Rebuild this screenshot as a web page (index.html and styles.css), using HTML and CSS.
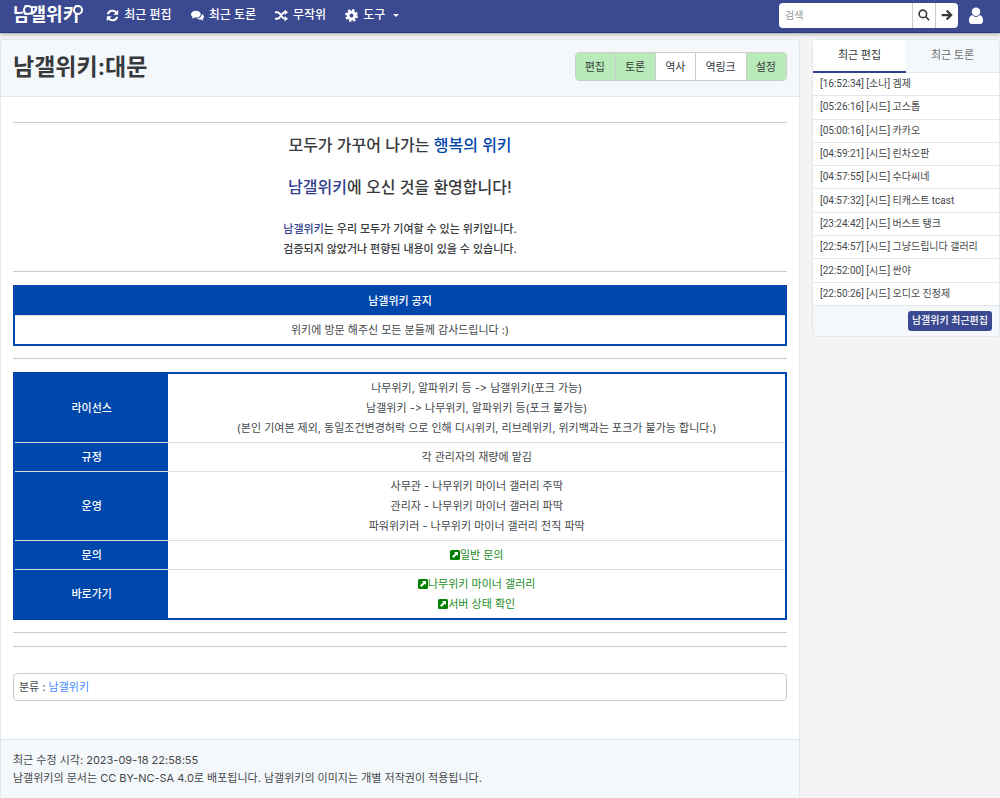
FILE: index.html
```
<!DOCTYPE html>
<html lang="ko">
<head>
    <meta charset="UTF-8">
    <meta name="viewport" content="width=device-width, initial-scale=1.0">
    <title>남갤위키:대문</title>
    <link rel="stylesheet" href="styles.css">
</head>
<body>
    <nav class="navbar">
        <a class="brand" href="#">남갤위키</a>
        <a class="nav-link" href="#">
            <svg class="icon" viewBox="0 0 16 16" fill="none" stroke="currentColor" stroke-width="2.4"><path d="M2.2 6.6a6 6 0 0 1 10.4-2.4M13.8 9.4a6 6 0 0 1-10.4 2.4"/><path d="M15 1v6H9zM1 15V9h6z" fill="currentColor" stroke="none"/></svg>
            최근 편집
        </a>
        <a class="nav-link" href="#">
            <svg class="icon" viewBox="0 0 16 16" fill="currentColor"><path d="M6 2C2.700 2 0 4 0 6.500c0 1.400.8 2.600 2.100 3.400-.2.700-.6 1.200-1.100 1.700 1.300-.1 2.400-.5 3.200-1.200.6.100 1.200.200 1.800.200 3.300 0 6-1.900 6-4.200S9.300 2 6 2z"/><path d="M13.300 6c.1 3.300-3 5.600-6.500 5.800 1 .8 2.500 1.200 4 1.200.5 0 1 0 1.400-.1.900.7 1.900 1.100 3.100 1.200-.5-.5-.8-1-1-1.700 1-.7 1.700-1.700 1.700-2.900 0-1.500-1-2.900-2.700-3.500z"/></svg>
            최근 토론
        </a>
        <a class="nav-link" href="#">
            <svg class="icon" viewBox="0 0 16 16"><path d="M0 4h3c4 0 5 8 9 8h1M0 12h3c4 0 5-8 9-8h1" fill="none" stroke="currentColor" stroke-width="2.2"/><path d="M12 0.500 16 4l-4 3.500zM12 8.500l4 3.500-4 3.500z" fill="currentColor"/></svg>
            무작위
        </a>
        <a class="nav-link" href="#">
            <svg class="icon" viewBox="0 0 16 16"><circle cx="8" cy="8" r="4.200" fill="none" stroke="currentColor" stroke-width="3.600"/><circle cx="8" cy="8" r="6.400" fill="none" stroke="currentColor" stroke-width="3" stroke-dasharray="2.800 2.230"/></svg>
            도구
            <span class="caret"></span>
        </a>
        <form class="search">
            <input type="search" placeholder="검색" aria-label="검색">
            <button type="submit" aria-label="찾기">
                <svg viewBox="0 0 16 16" fill="none" stroke="currentColor" stroke-width="2.2"><circle cx="6.500" cy="6.500" r="5"/><path d="M10.200 10.200 15 15"/></svg>
            </button>
            <button type="button" aria-label="이동">
                <svg viewBox="0 0 16 16" fill="none" stroke="currentColor" stroke-width="3"><path d="M1 8h12M7.500 2l6 6-6 6"/></svg>
            </button>
        </form>
        <a class="user" href="#" aria-label="로그인">
            <svg viewBox="0 0 16 18" fill="currentColor"><circle cx="8" cy="5" r="4.500"/><path d="M4 8.500C1.500 9 .5 11.500.5 14.500.5 16.500 1.700 18 3.500 18h9c1.800 0 3-1.500 3-3.500 0-3-1-5.500-3.500-6-1 1.200-2.400 2-4 2s-3-.8-4-2z"/></svg>
        </a>
    </nav>

    <div class="container">
        <main class="article">
            <header class="article-header">
                <h1>남갤위키:대문</h1>
                <div class="tools">
                    <button class="green">편집</button>
                    <button class="green">토론</button>
                    <button>역사</button>
                    <button>역링크</button>
                    <button class="green">설정</button>
                </div>
            </header>

            <div class="article-body">
                <hr>
                <div class="welcome">
                    <h2>모두가 가꾸어 나가는 <span class="blue">행복의 위키</span></h2>
                    <h2><span class="navy">남갤위키</span>에 오신 것을 환영합니다!</h2>
                    <p><span class="navy">남갤위키</span>는 우리 모두가 기여할 수 있는 위키입니다.<br>검증되지 않았거나 편향된 내용이 있을 수 있습니다.</p>
                </div>
                <hr>
                <table class="wiki-table">
                    <tr><th>남갤위키 공지</th></tr>
                    <tr><td>위키에 방문 해주신 모든 분들께 감사드립니다 :)</td></tr>
                </table>
                <hr>
                <table class="wiki-table info">
                    <tr>
                        <th>라이선스</th>
                        <td>나무위키, 알파위키 등 -&gt; 남갤위키(포크 가능)<br>남갤위키 -&gt; 나무위키, 알파위키 등(포크 불가능)<br>(본인 기여본 제외, 동일조건변경허락 으로 인해 디시위키, 리브레위키, 위키백과는 포크가 불가능 합니다.)</td>
                    </tr>
                    <tr>
                        <th>규정</th>
                        <td>각 관리자의 재량에 맡김</td>
                    </tr>
                    <tr>
                        <th>운영</th>
                        <td>사무관 - 나무위키 마이너 갤러리 주딱<br>관리자 - 나무위키 마이너 갤러리 파딱<br>파워위키러 - 나무위키 마이너 갤러리 전직 파딱</td>
                    </tr>
                    <tr>
                        <th>문의</th>
                        <td><a class="external" href="#"><svg viewBox="0 0 10 10"><rect width="10" height="10" rx="1.500" fill="#008000"/><path d="M4 2h4v4L6.800 4.800 3.500 8 2 6.500l3.200-3.300z" fill="#fff"/></svg>일반 문의</a></td>
                    </tr>
                    <tr>
                        <th>바로가기</th>
                        <td>
                            <a class="external" href="#"><svg viewBox="0 0 10 10"><rect width="10" height="10" rx="1.500" fill="#008000"/><path d="M4 2h4v4L6.800 4.800 3.500 8 2 6.500l3.200-3.300z" fill="#fff"/></svg>나무위키 마이너 갤러리</a><br>
                            <a class="external" href="#"><svg viewBox="0 0 10 10"><rect width="10" height="10" rx="1.500" fill="#008000"/><path d="M4 2h4v4L6.800 4.800 3.500 8 2 6.500l3.200-3.300z" fill="#fff"/></svg>서버 상태 확인</a>
                        </td>
                    </tr>
                </table>
                <hr>
                <hr>
                <div class="category">분류 : <a href="#">남갤위키</a></div>
            </div>

            <footer class="article-footer">
                <p>최근 수정 시각: 2023-09-18 22:58:55</p>
                <p>남갤위키의 문서는 CC BY-NC-SA 4.0로 배포됩니다. 남갤위키의 이미지는 개별 저작권이 적용됩니다.</p>
            </footer>
        </main>

        <aside class="sidebar">
            <div class="tabs">
                <button class="active">최근 편집</button>
                <button>최근 토론</button>
            </div>
            <ul class="recent">
                <li><a href="#">[16:52:34] [소나] 겜제</a></li>
                <li><a href="#">[05:26:16] [시드] 고스톱</a></li>
                <li><a href="#">[05:00:16] [시드] 카카오</a></li>
                <li><a href="#">[04:59:21] [시드] 린차오판</a></li>
                <li><a href="#">[04:57:55] [시드] 수다씨네</a></li>
                <li><a href="#">[04:57:32] [시드] 티캐스트 tcast</a></li>
                <li><a href="#">[23:24:42] [시드] 버스트 탱크</a></li>
                <li><a href="#">[22:54:57] [시드] 그냥드립니다 갤러리</a></li>
                <li><a href="#">[22:52:00] [시드] 싼야</a></li>
                <li><a href="#">[22:50:26] [시드] 오디오 진정제</a></li>
            </ul>
            <div class="sidebar-footer">
                <a class="more" href="#">남갤위키 최근편집</a>
            </div>
        </aside>
    </div>
</body>
</html>
```
FILE: styles.css
```
* {
    box-sizing: border-box;
}
body {
    margin: 0;
    background-color: #f4f4f5;
    color: #44484b;
    font-family: Inter, 'Noto Sans CJK KR', sans-serif;
    font-size: 11px;
    line-height: 20px;
}
a {
    text-decoration: none;
    color: inherit;
}
button,
input {
    font: inherit;
    color: #373a3c;
}
.navbar {
    display: flex;
    align-items: center;
    height: 33px;
    padding: 0 16px 2px 13px;
    background-color: #3b4990;
    border-bottom: 1px solid #2c3775;
    box-shadow: 0 1px 4px rgba(0,0,0,0.35);
    color: #fff;
}
.brand {
    position: relative;
    margin-right: 27px;
    font-size: 18px;
    font-weight: 700;
}
/* little rings on top of the logo */
.brand::before,
.brand::after {
    content: '';
    position: absolute;
    top: 0;
    left: 10px;
    width: 6px;
    height: 6px;
    border: 2px solid #fff;
    border-radius: 50%;
    background-color: #3b4990;
}
.brand::after {
    left: 60px;
}
.nav-link {
    display: flex;
    align-items: center;
    gap: 5px;
    margin-right: 19px;
    font-size: 12px;
    font-weight: 500;
}
.icon {
    width: 13px;
    height: 13px;
}
.caret {
    margin-left: 3px;
    border-top: 3px solid #fff;
    border-left: 3px solid transparent;
    border-right: 3px solid transparent;
}
.search {
    display: flex;
    width: 179px;
    height: 25px;
    margin-left: auto;
    border-radius: 4px;
    background-color: #fff;
    overflow: hidden;
}
.search input {
    flex: 1;
    min-width: 0;
    padding: 0 6px;
    border: none;
    background: none;
    font-size: 10px;
}
.search input::placeholder {
    color: #999;
}
.search button {
    display: flex;
    align-items: center;
    justify-content: center;
    width: 23px;
    padding: 0;
    border: none;
    border-left: 1px solid #ccc;
    background: none;
}
.search svg {
    width: 12px;
    height: 12px;
}
.user svg {
    display: block;
    width: 16px;
    height: 17px;
    margin-left: 10px;
}
.container {
    display: grid;
    grid-template-columns: 80% 1fr;
    gap: 12px;
    align-items: start;
    padding-top: 6px;
}
.article {
    border: 1px solid #e3e7e9;
    border-bottom: none;
    border-radius: 4px 4px 0 0;
    background-color: #fff;
}
.article-header {
    display: flex;
    justify-content: space-between;
    padding: 12px;
    border-bottom: 1px solid #e1e8ed;
    border-radius: 4px 4px 0 0;
    background-color: #f5f8fa;
}
.article-header h1 {
    margin: 0;
    color: #373a3c;
    font-size: 23px;
    line-height: 30px;
    font-weight: 600;
}
.tools {
    display: flex;
    height: 29px;
    margin-bottom: 3px;
    border: 1px solid #ccc;
    border-radius: 4px;
    overflow: hidden;
}
.tools button {
    padding: 0 10px 0 9px;
    border: none;
    border-left: 1px solid #ccc;
    background-color: #fff;
    font-size: 11px;
}
.tools button:first-child {
    border-left: none;
}
.tools .green {
    background-color: #b9eab9;
}
.article-body {
    padding: 12px 12px 38px;
}
hr {
    margin: 12px 0 13px;
    border: none;
    border-top: 1px solid #ccc;
}
.article-body > hr:first-child {
    margin: 13px 0 12px;
}
.welcome {
    color: #373a3c;
    text-align: center;
    font-weight: 500;
}
.welcome h2 {
    margin: 0 0 22px;
    font-size: 16px;
    line-height: 20px;
    font-weight: 500;
}
.welcome p {
    margin: 0;
}
.blue {
    color: #0047ab;
}
.navy {
    color: #31408f;
}
.wiki-table {
    width: 100%;
    border: 2px solid #0047ab;
    border-collapse: collapse;
    text-align: center;
}
.wiki-table th,
.wiki-table td {
    padding: 4px 10px;
    border-top: 1px solid #ddd;
}
.wiki-table th {
    background-color: #0047ab;
    color: #fff;
    font-weight: 500;
}
.info th {
    width: 20%;
}
.external {
    color: #228b22;
}
.external svg {
    width: 10px;
    height: 10px;
    vertical-align: -1px;
}
.category {
    margin-top: 26px;
    padding: 3px 5px;
    border: 1px solid #ccc;
    border-radius: 4px;
}
.category a {
    color: #4488ff;
}
.article-footer {
    padding: 11px 12px;
    border-top: 1px solid #e1e8ed;
    background-color: #f5f8fa;
    font-size: 11px;
    line-height: 18px;
}
.article-footer p {
    margin: 0;
}
.sidebar {
    border: 1px solid #e1e8ed;
    border-radius: 4px;
    background-color: #f5f8fa;
    font-family: Roboto, 'Noto Sans CJK KR', sans-serif;
    font-size: 10px;
}
.tabs {
    display: flex;
}
.tabs button {
    flex: 1;
    height: 33px;
    padding: 0;
    border: none;
    border-bottom: 1px solid #e1e8ed;
    background: none;
    color: #6b7073;
    font-size: 11px;
}
.tabs .active {
    border-bottom: 2px solid #31408f;
    background-color: #fff;
    color: #373a3c;
}
.recent {
    display: grid;
    grid-auto-rows: 1fr;
    min-height: 233px;
    margin: 0;
    padding: 0;
    list-style: none;
    background-color: #fff;
}
.recent li {
    display: flex;
    align-items: center;
    padding: 0 7px;
    border-bottom: 1px solid #e1e8ed;
}
.sidebar-footer {
    display: flex;
    justify-content: flex-end;
    padding: 5px 7px;
}
.more {
    padding: 0 4px;
    border-radius: 3px;
    background-color: #3b4990;
    color: #fff;
    font-weight: 500;
}
```
